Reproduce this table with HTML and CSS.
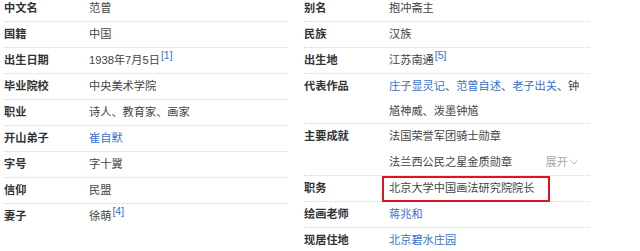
FILE: index.html
```html
<!DOCTYPE html>
<html lang="zh">
<head>
<meta charset="utf-8">
<link rel="stylesheet" href="styles.css">
</head>
<body>
<div class="info">
  <dl class="col left">
    <div class="row"><dt>中文名</dt><dd>范曾</dd></div>
    <div class="row"><dt>国籍</dt><dd>中国</dd></div>
    <div class="row"><dt>出生日期</dt><dd>1938年7月5日<sup>[1]</sup></dd></div>
    <div class="row"><dt>毕业院校</dt><dd>中央美术学院</dd></div>
    <div class="row"><dt>职业</dt><dd>诗人、教育家、画家</dd></div>
    <div class="row"><dt>开山弟子</dt><dd><a>崔自默</a></dd></div>
    <div class="row"><dt>字号</dt><dd>字十翼</dd></div>
    <div class="row"><dt>信仰</dt><dd>民盟</dd></div>
    <div class="row last"><dt>妻子</dt><dd>徐萌<sup>[4]</sup></dd></div>
  </dl>
  <dl class="col right">
    <div class="row"><dt>别名</dt><dd>抱冲斋主</dd></div>
    <div class="row"><dt>民族</dt><dd>汉族</dd></div>
    <div class="row"><dt>出生地</dt><dd>江苏南通<sup>[5]</sup></dd></div>
    <div class="row"><dt>代表作品</dt><dd class="wrap"><a>庄子显灵记</a><span>、</span><a>范曾自述</a><span>、</span><a>老子出关</a><span>、钟</span><span>馗神威、泼墨钟馗</span></dd></div>
    <div class="row"><dt>主要成就</dt><dd class="multi"><span class="line">法国荣誉军团骑士勋章</span><span class="line split"><span>法兰西公民之星金质勋章</span><span class="more">展开<svg width="8" height="5" viewBox="0 0 8 5"><polyline points="0.5,0.5 4,4 7.5,0.5" fill="none" stroke="#b0b0b0" stroke-width="1"/></svg></span></span></dd></div>
    <div class="row"><dt>职务</dt><dd class="marked">北京大学中国画法研究院院长<span class="mark"></span></dd></div>
    <div class="row"><dt>绘画老师</dt><dd><a>蒋兆和</a></dd></div>
    <div class="row"><dt>现居住地</dt><dd><a>北京碧水庄园</a></dd></div>
  </dl>
</div>
</body>
</html>
```
FILE: styles.css
```css
html, body {
  margin: 0;
  padding: 0;
  background: #fff;
  overflow: hidden;
}
body {
  font-family: "Liberation Sans", "Noto Sans CJK SC", sans-serif;
  font-size: 11.2px;
  color: #444;
}
.info {
  display: flex;
  gap: 16px;
  padding-left: 4px;
  margin-top: -4px;
}
.col {
  margin: 0;
  display: flex;
  flex-direction: column;
}
.left { width: 284px; }
.right { width: 286px; }
.row {
  display: flex;
  border-bottom: 1px dotted #d4d4d4;
}
.row.last { border-bottom: none; }
dt {
  width: 85px;
  flex: none;
  font-weight: bold;
  color: #333;
  line-height: 25px;
}
dd {
  margin: 0;
  flex: 1;
  line-height: 25px;
  min-width: 0;
}
dd.wrap { line-height: 24.5px; }
dd.multi { display: flex; flex-direction: column; }
dd.multi .line { line-height: 25.5px; }
.split { display: flex; justify-content: space-between; }
.more {
  color: #a8a8a8;
  margin-right: 12px;
  display: inline-flex;
  align-items: center;
  gap: 2px;
}
a { color: #3a6fcc; }
sup {
  font-size: 10.5px;
  line-height: 0;
  vertical-align: 5px;
  color: #3a6fcc;
  margin-left: 1px;
}
.marked { position: relative; }
.mark {
  position: absolute;
  left: -7px;
  top: 0;
  width: 168px;
  height: 26px;
  box-sizing: border-box;
  border: 2px solid #e0141e;
}
```
